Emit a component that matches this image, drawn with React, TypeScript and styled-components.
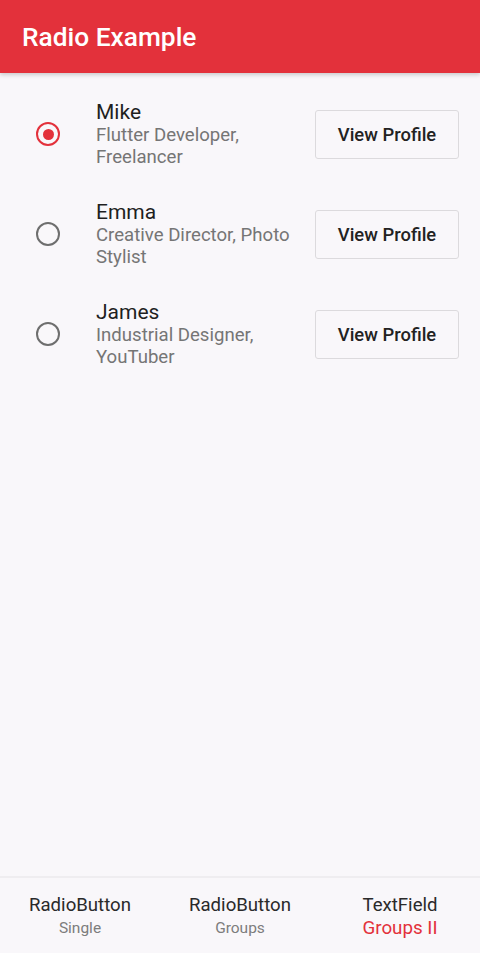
import React, { useState } from "react";
import styled, { createGlobalStyle } from "styled-components";

const Global = createGlobalStyle`
  html, body { margin: 0; padding: 0; }
  body { background: #f9f7fa; font-family: Roboto, "Noto Sans", sans-serif; }
`;

const Page = styled.div`
  width: 480px;
  height: 953px;
  display: flex;
  flex-direction: column;
  background: #f9f7fa;
  overflow: hidden;
`;

const AppBar = styled.header`
  height: 73px;
  flex: none;
  background: #e3313b;
  display: flex;
  align-items: center;
  padding: 0 22px;
  box-shadow: 0 2px 4px rgba(0, 0, 0, 0.18);
  position: relative;
  z-index: 1;
`;

const Title = styled.h1`
  margin: 0 0 0 0;
  padding-top: 1px;
  font-size: 26.3px;
  font-weight: 500;
  color: #ffffff;
`;

const List = styled.main`
  flex: 1;
  padding-top: 11px;
  display: flex;
  flex-direction: column;
`;

const Row = styled.div`
  height: 100px;
  display: flex;
  align-items: center;
  padding: 0 21px 0 35px;
`;

const RadioOuter = styled.button<{ $checked: boolean }>`
  width: 24px;
  height: 24px;
  margin-left: 1px;
  flex: none;
  border-radius: 50%;
  border: 2.5px solid ${(p) => (p.$checked ? "#e3313b" : "#6e6e6e")};
  background: transparent;
  padding: 0;
  display: flex;
  align-items: center;
  justify-content: center;
  cursor: pointer;
  box-sizing: border-box;
`;

const RadioDot = styled.span`
  width: 11px;
  height: 11px;
  border-radius: 50%;
  background: #e3313b;
`;

const Info = styled.div`
  margin-left: 36px;
  flex: 1;
`;

const Name = styled.div`
  font-size: 21px;
  color: #1f1f1f;
  line-height: 24px;
`;

const Desc = styled.div`
  font-size: 18.6px;
  color: #757575;
  line-height: 22px;
  width: 200px;
`;

const ProfileButton = styled.button`
  flex: none;
  width: 144px;
  height: 49px;
  border: 1.5px solid #dcdadd;
  border-radius: 3px;
  background: #f9f7fa;
  font-family: Roboto, sans-serif;
  font-size: 18.4px;
  font-weight: 500;
  color: #222;
  cursor: pointer;
  padding: 0;
`;

const BottomNav = styled.nav`
  height: 75px;
  flex: none;
  border-top: 2px solid #efedf0;
  display: grid;
  grid-template-columns: repeat(3, 1fr);
  align-items: center;
`;

const NavItem = styled.div`
  display: flex;
  flex-direction: column;
  align-items: center;
  margin-top: 1px;
`;

const NavTop = styled.div`
  font-size: 18.6px;
  color: #2a2a2a;
  line-height: 23px;
`;

const NavSub = styled.div<{ $active?: boolean }>`
  font-size: ${(p) => (p.$active ? "18.8px" : "15.5px")};
  color: ${(p) => (p.$active ? "#e3313b" : "#7d7d7d")};
  line-height: 22px;
`;

const people = [
  { name: "Mike", desc: "Flutter Developer, Freelancer" },
  { name: "Emma", desc: "Creative Director, Photo Stylist" },
  { name: "James", desc: "Industrial Designer, YouTuber" },
];

export default function App() {
  const [selected, setSelected] = useState(0);
  return (
    <Page>
      <Global />
      <AppBar>
        <Title>Radio Example</Title>
      </AppBar>
      <List>
        {people.map((p, i) => (
          <Row key={p.name}>
            <RadioOuter $checked={selected === i} onClick={() => setSelected(i)}>
              {selected === i && <RadioDot />}
            </RadioOuter>
            <Info>
              <Name>{p.name}</Name>
              <Desc>{p.desc}</Desc>
            </Info>
            <ProfileButton>View Profile</ProfileButton>
          </Row>
        ))}
      </List>
      <BottomNav>
        <NavItem>
          <NavTop>RadioButton</NavTop>
          <NavSub>Single</NavSub>
        </NavItem>
        <NavItem>
          <NavTop>RadioButton</NavTop>
          <NavSub>Groups</NavSub>
        </NavItem>
        <NavItem>
          <NavTop>TextField</NavTop>
          <NavSub $active>Groups II</NavSub>
        </NavItem>
      </BottomNav>
    </Page>
  );
}
